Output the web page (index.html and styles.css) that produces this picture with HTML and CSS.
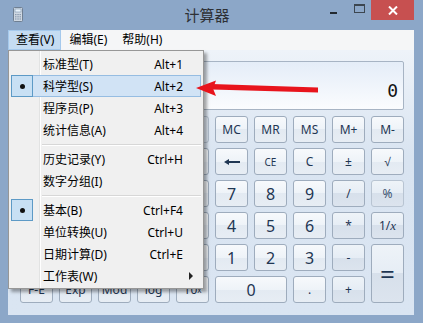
FILE: index.html
```html
<!DOCTYPE html>
<html lang="zh-CN">
<head>
    <meta charset="UTF-8">
    <meta name="viewport" content="width=device-width, initial-scale=1.0">
    <title>计算器</title>
    <link rel="stylesheet" href="styles.css">
</head>
<body>
    <div class="window">
        <div class="title-bar">
            <div class="title-left">
                <svg class="app-icon" width="10" height="15" viewBox="0 0 10 15">
                    <rect x="0.5" y="0.5" width="9" height="14" rx="1" fill="#cfd8e2" stroke="#6f7f92"/>
                    <rect x="2" y="2" width="6" height="3" fill="#e9f3fb" stroke="#7d94ad" stroke-width="0.6"/>
                    <g fill="#8a9bb0">
                        <rect x="2" y="7" width="1.5" height="1.2"/><rect x="4.3" y="7" width="1.5" height="1.2"/><rect x="6.5" y="7" width="1.5" height="1.2"/>
                        <rect x="2" y="9.2" width="1.5" height="1.2"/><rect x="4.3" y="9.2" width="1.5" height="1.2"/><rect x="6.5" y="9.2" width="1.5" height="1.2"/>
                        <rect x="2" y="11.4" width="1.5" height="1.2"/><rect x="4.3" y="11.4" width="1.5" height="1.2"/><rect x="6.5" y="11.4" width="1.5" height="1.2"/>
                    </g>
                </svg>
            </div>
            <div class="title">计算器</div>
            <div class="caption-buttons">
                <div class="caption-min"><span></span></div>
                <div class="caption-max"><span></span></div>
                <div class="caption-close">
                    <svg width="10" height="9" viewBox="0 0 10 9">
                        <path d="M1 0.5 L9 8.5 M9 0.5 L1 8.5" stroke="#fff" stroke-width="2"/>
                    </svg>
                </div>
            </div>
        </div>

        <div class="menu-bar">
            <span class="menu-title open">查看(V)</span>
            <span class="menu-title">编辑(E)</span>
            <span class="menu-title">帮助(H)</span>
        </div>

        <div class="client">
            <div class="display">
                <div class="value">0</div>
            </div>
            <div class="keypad">
                <!-- angle radios and scientific keys sit under the open menu -->
                <div class="angle-group"></div>
                <button class="key small">MC</button>
                <button class="key small">MR</button>
                <button class="key small">MS</button>
                <button class="key small">M+</button>
                <button class="key small">M-</button>

                <div class="blank"></div>
                <button class="key"></button>
                <button class="key"></button>
                <button class="key"></button>
                <button class="key"></button>
                <button class="key">
                    <svg width="16" height="6" viewBox="0 0 16 6"><path d="M0 3 L5 0 L5 2 L16 2 L16 4 L5 4 L5 6 Z" fill="#1f3653"/></svg>
                </button>
                <button class="key tiny">CE</button>
                <button class="key small">C</button>
                <button class="key small">&#xb1;</button>
                <button class="key small">&#x221a;</button>

                <button class="key"></button>
                <button class="key"></button>
                <button class="key"></button>
                <button class="key"></button>
                <button class="key"></button>
                <button class="key digit">7</button>
                <button class="key digit">8</button>
                <button class="key digit">9</button>
                <button class="key op small">/</button>
                <button class="key op small pale">%</button>

                <button class="key"></button>
                <button class="key"></button>
                <button class="key"></button>
                <button class="key"></button>
                <button class="key"></button>
                <button class="key digit">4</button>
                <button class="key digit">5</button>
                <button class="key digit">6</button>
                <button class="key op small">*</button>
                <button class="key op small">1/<i>x</i></button>

                <button class="key"></button>
                <button class="key"></button>
                <button class="key"></button>
                <button class="key"></button>
                <button class="key"></button>
                <button class="key digit">1</button>
                <button class="key digit">2</button>
                <button class="key digit">3</button>
                <button class="key op small">-</button>
                <button class="key op equals">=</button>

                <button class="key small">F-E</button>
                <button class="key small">Exp</button>
                <button class="key small">Mod</button>
                <button class="key small">log</button>
                <button class="key small">10<sup>x</sup></button>
                <button class="key digit zero">0</button>
                <button class="key small">.</button>
                <button class="key op small">+</button>
            </div>
        </div>

        <!-- open "查看" menu, drawn over the calculator -->
        <div class="dropdown">
            <div class="menu-item"><span class="check"></span><span class="label">标准型(T)</span><span class="shortcut">Alt+1</span></div>
            <div class="menu-item hover"><span class="check on"></span><span class="label">科学型(S)</span><span class="shortcut">Alt+2</span></div>
            <div class="menu-item"><span class="check"></span><span class="label">程序员(P)</span><span class="shortcut">Alt+3</span></div>
            <div class="menu-item"><span class="check"></span><span class="label">统计信息(A)</span><span class="shortcut">Alt+4</span></div>
            <div class="separator"></div>
            <div class="menu-item"><span class="check"></span><span class="label">历史记录(Y)</span><span class="shortcut">Ctrl+H</span></div>
            <div class="menu-item"><span class="check"></span><span class="label">数字分组(I)</span><span class="shortcut"></span></div>
            <div class="separator"></div>
            <div class="menu-item"><span class="check on"></span><span class="label">基本(B)</span><span class="shortcut">Ctrl+F4</span></div>
            <div class="menu-item"><span class="check"></span><span class="label">单位转换(U)</span><span class="shortcut">Ctrl+U</span></div>
            <div class="menu-item"><span class="check"></span><span class="label">日期计算(D)</span><span class="shortcut">Ctrl+E</span></div>
            <div class="menu-item"><span class="check"></span><span class="label">工作表(W)</span><span class="submenu-arrow"></span></div>
        </div>

        <svg class="red-arrow" width="135" height="25" viewBox="190 75 135 25">
            <path d="M212 84 L318 87.5 L318 92.5 L212 89.5 Z" fill="#e8141c"/>
            <path d="M196 88 L216 80.5 L213 88.5 L216 96 Z" fill="#e8141c"/>
        </svg>
    </div>
</body>
</html>
```

FILE: styles.css
```css
body {
    margin: 0;
    font-family: "Noto Sans", "Noto Sans CJK SC", sans-serif;
    font-size: 12px;
    color: #000;
    background-color: #fff;
}
.window {
    position: relative;
    width: 423px;
    height: 323px;
    box-sizing: border-box;
    padding: 0 9px 8px 8px;
    background-color: #8ca7c8;
    display: flex;
    flex-direction: column;
    overflow: hidden;
}
.title-bar {
    height: 30px;
    margin: 0 -9px 0 -8px;
    padding-right: 9px;
    display: grid;
    grid-template-columns: 1fr auto 1fr;
    align-items: start;
}
.title-left {
    padding: 7px 0 0 13px;
}
.app-icon {
    display: block;
}
.title {
    font-family: "Noto Sans CJK SC", sans-serif;
    font-size: 15px;
    line-height: 30px;
    color: #2e3035;
}
.caption-buttons {
    display: flex;
    justify-content: flex-end;
}
.caption-min, .caption-max {
    height: 20px;
    display: flex;
    align-items: center;
    justify-content: center;
}
.caption-min {
    width: 27px;
}
.caption-min span {
    width: 7px;
    height: 2px;
    margin-top: 6px;
    background-color: #23292f;
}
.caption-max {
    width: 24px;
}
.caption-max span {
    width: 9px;
    height: 6px;
    margin: -4px 0 0 1px;
    border: 1px solid #3c4650;
    border-top-width: 2px;
}
.caption-close {
    width: 43px;
    height: 20px;
    background-color: #c75050;
    display: flex;
    align-items: center;
    justify-content: center;
}
.caption-close svg {
    display: block;
}
.menu-bar {
    height: 20px;
    background-color: #f5f6f7;
    display: flex;
    align-items: center;
}
.menu-title {
    height: 20px;
    line-height: 18px;
    padding: 0 6px 0 7px;
    border: 1px solid transparent;
    box-sizing: border-box;
}
.menu-title.open {
    background-color: #c5dcf2;
    border-color: #a5c9ec;
}
.client {
    flex: 1;
    padding: 11px 10px 0 12px;
    background: linear-gradient(#eef3f9, #d9e4f1 40%, #dae5f2);
}
.display {
    height: 49px;
    box-sizing: border-box;
    border: 1px solid #a7b4c4;
    border-radius: 2px;
    background: linear-gradient(#e4edf8, #fbfcfe);
    display: flex;
    flex-direction: column;
    justify-content: flex-end;
    padding: 0 5px 9px;
}
.value {
    text-align: right;
    font-family: "DejaVu Sans Mono", monospace;
    font-size: 18px;
    line-height: 18px;
    color: #141414;
}
.keypad {
    margin-top: 6px;
    display: grid;
    grid-template-columns: repeat(10, 33px);
    grid-auto-rows: 27px;
    gap: 5px 6px;
}
.angle-group {
    grid-column: span 5;
    border: 1px solid #b3c0cf;
    border-radius: 3px;
}
.key {
    padding: 0;
    margin: 0;
    border: 1px solid #9eacbd;
    border-radius: 3px;
    background: linear-gradient(#f7f9fc, #eef3f8 50%, #e3eaf2 50%, #e7edf4);
    color: #1f3653;
    font-family: "Noto Sans", sans-serif;
    font-size: 16px;
    line-height: 1;
    display: flex;
    align-items: center;
    justify-content: center;
}
.key.op {
    background: linear-gradient(#eef3f8, #e6edf5 50%, #d7e0eb 50%, #dce4ee);
}
.key.pale {
    border-color: #b8c4d2;
    color: #3c5270;
}
.key.small {
    font-size: 12px;
}
.key.tiny {
    font-size: 10px;
}
.key i {
    font-family: "Liberation Serif", serif;
    font-size: 13px;
}
.key sup {
    font-size: 8px;
}
.key.equals {
    grid-row: span 2;
    font-size: 26px;
}
.key.zero {
    grid-column: span 2;
}
.dropdown {
    position: absolute;
    left: 8px;
    top: 50px;
    width: 196px;
    height: 239px;
    box-sizing: border-box;
    padding: 2px 2px 1px;
    border: 1px solid #979797;
    background:
        linear-gradient(to right, transparent 30px, #e2e3e3 30px, #e2e3e3 31px, #fff 31px, #fff 32px, transparent 32px),
        #f0f0f0;
    box-shadow: 3px 3px 3px rgba(0, 0, 0, 0.35);
}
.menu-item {
    position: relative;
    height: 22px;
    display: flex;
    align-items: center;
}
.menu-item.hover {
    background-color: #d1e3f5;
    box-shadow: inset 0 0 0 1px #96bde2;
}
.check {
    width: 22px;
    height: 22px;
    box-sizing: border-box;
    display: flex;
    align-items: center;
    justify-content: center;
}
.check.on {
    background-color: #c8e0f4;
    border: 1px solid #5d9ac6;
}
.check.on::after {
    content: "";
    width: 5px;
    height: 5px;
    border-radius: 50%;
    background-color: #111;
}
.label {
    flex: 1;
    margin-left: 10px;
}
.shortcut {
    padding-right: 18px;
}
.submenu-arrow {
    width: 0;
    height: 0;
    margin-right: 8px;
    border-top: 4px solid transparent;
    border-bottom: 4px solid transparent;
    border-left: 4px solid #222;
}
.separator {
    height: 7px;
    margin-left: 31px;
    background: linear-gradient(transparent 3px, #d7d7d7 3px, #d7d7d7 4px, #fff 4px, #fff 5px, transparent 5px);
}
.red-arrow {
    position: absolute;
    left: 190px;
    top: 75px;
}
```
